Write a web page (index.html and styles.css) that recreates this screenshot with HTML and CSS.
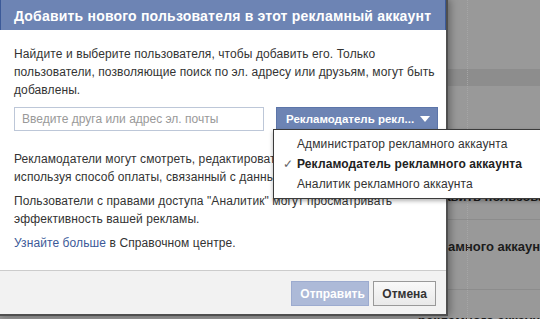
FILE: index.html
```html
<!DOCTYPE html>
<html lang="ru">
<head>
    <meta charset="UTF-8">
    <title>Добавить нового пользователя</title>
    <link rel="stylesheet" href="styles.css">
</head>
<body>
    <div class="page">
        <div class="page-band"></div>
        <div class="page-row row-a"><span class="page-text">Добавить пользователя</span></div>
        <div class="page-row row-b"><span class="page-text">рекламного аккаунта</span></div>
        <div class="page-row row-c"><span class="page-text">рекламного аккаунта</span></div>
        <div class="page-dots"></div>
    </div>

    <div class="dialog">
        <div class="dialog-header">Добавить нового пользователя в этот рекламный аккаунт</div>
        <div class="dialog-body">
            <p>Найдите и выберите пользователя, чтобы добавить его. Только пользователи, позволяющие поиск по эл. адресу или друзьям, могут быть добавлены.</p>
            <div class="picker">
                <input class="friend-input" type="text" placeholder="Введите друга или адрес эл. почты">
                <div class="role-select">
                    <span class="role-label">Рекламодатель рекл...</span>
                    <span class="caret"></span>
                </div>
            </div>
            <p class="spaced">Рекламодатели могут смотреть, редактировать и создавать рекламу, используя способ оплаты, связанный с данным аккаунтом.</p>
            <p>Пользователи с правами доступа "Аналитик" могут просматривать эффективность вашей рекламы.</p>
            <p><a href="#">Узнайте больше</a> в Справочном центре.</p>
        </div>
        <div class="dialog-footer">
            <button class="btn btn-primary" disabled>Отправить</button>
            <button class="btn">Отмена</button>
        </div>
    </div>

    <ul class="role-menu">
        <li>Администратор рекламного аккаунта</li>
        <li class="checked">Рекламодатель рекламного аккаунта</li>
        <li>Аналитик рекламного аккаунта</li>
    </ul>
</body>
</html>
```

FILE: styles.css
```css
* {
    box-sizing: border-box;
}

body {
    margin: 0;
    width: 540px;
    height: 319px;
    overflow: hidden;
    font-family: "Liberation Sans", Arial, sans-serif;
    font-size: 12px;
    color: #333;
    position: relative;
}

/* dimmed page behind the dialog */
.page {
    height: 319px;
    background: #999;
    position: relative;
    overflow: hidden;
}

.page-band {
    height: 17px;
    margin-top: 69px;
    background: #8d8d8d;
}

.page-row {
    border-top: 1px solid #8c8c8c;
    padding-left: 418px;
    white-space: nowrap;
    line-height: 16px;
}

.row-a {
    margin-top: 102px;
    height: 31px;
}

.row-b {
    height: 70px;
    padding-top: 19px;
}

.row-c {
    padding-top: 23px;
}

.page-text {
    font-weight: bold;
    font-size: 13px;
    color: #1c1c1c;
}

.page-dots {
    position: absolute;
    top: 0;
    bottom: 0;
    left: 467px;
    border-left: 1px dotted #a6a6a6;
}

/* dialog */
.dialog {
    position: absolute;
    top: -1px;
    left: -2px;
    width: 450px;
    height: 317px;
    background: #fff;
    border: 2px solid #4f4f4f;
    border-top: none;
    box-shadow: 2px 0 8px rgba(0, 0, 0, 0.35);
    display: flex;
    flex-direction: column;
}

.dialog-header {
    height: 31px;
    background: #6d84b4;
    border: 1px solid #3b5998;
    border-bottom: none;
    color: #fff;
    font-size: 14px;
    font-weight: bold;
    letter-spacing: 0.2px;
    padding: 8px 0 0 13px;
    white-space: nowrap;
}

.dialog-body {
    flex: 1;
    padding: 15px 4px 0 14px;
}

.dialog-body p {
    margin: 0 0 6px;
    line-height: 18px;
    letter-spacing: 0.1px;
}

.dialog-body p.spaced {
    margin-top: 19px;
}

.dialog-body a {
    color: #3b5998;
    text-decoration: none;
}

.picker {
    display: flex;
    align-items: flex-start;
    margin-top: 8px;
    gap: 12px;
}

.friend-input {
    flex: none;
    width: 250px;
    height: 24px;
    border: 1px solid #bdc7d8;
    padding: 0 7px;
    font-family: inherit;
    font-size: 12px;
    color: #333;
    outline: none;
}

.friend-input::placeholder {
    color: #999;
}

.role-select {
    flex: none;
    width: 162px;
    height: 23px;
    background: #6d84b4;
    border: 1px solid #5c75a9;
    color: #fff;
    font-weight: bold;
    white-space: nowrap;
    display: flex;
    align-items: center;
    justify-content: space-between;
    padding: 0 7px 0 9px;
}

.role-label {
    font-size: 11.5px;
}

.caret {
    width: 0;
    height: 0;
    border-left: 5px solid transparent;
    border-right: 5px solid transparent;
    border-top: 6px solid #fff;
}

.dialog-footer {
    height: 44px;
    background: #f2f2f2;
    border-top: 1px solid #ccc;
    display: flex;
    justify-content: flex-end;
    align-items: flex-start;
    gap: 4px;
    padding: 10px 10px 0 0;
}

.btn {
    height: 25px;
    padding: 0 8px;
    font-family: inherit;
    font-size: 12px;
    font-weight: bold;
    color: #333;
    background: linear-gradient(#f9f9f9, #e9e9e9);
    border: 1px solid #999;
}

.btn-primary {
    width: 78px;
    color: #fff;
    background: #adbad8;
    border-color: #9cabcf;
}

/* dropdown menu, open over everything */
.role-menu {
    position: absolute;
    top: 129px;
    left: 273px;
    width: 280px;
    margin: 0;
    padding: 4px 0;
    list-style: none;
    background: #fff;
    border: 1px solid #3b3b3b;
    box-shadow: 0 2px 4px rgba(0, 0, 0, 0.3);
}

.role-menu li {
    height: 20px;
    line-height: 20px;
    padding-left: 23px;
    font-size: 12px;
    letter-spacing: 0.12px;
    color: #333;
    position: relative;
}

.role-menu li.checked {
    font-weight: bold;
    color: #222;
}

.role-menu li.checked::before {
    content: "✓";
    position: absolute;
    left: 9px;
    font-weight: normal;
    color: #666;
}
```
